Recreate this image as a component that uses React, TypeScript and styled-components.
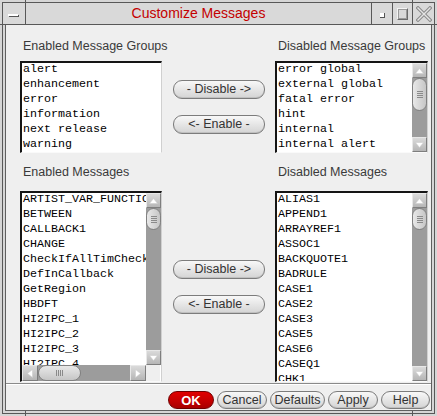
import React from 'react';
import styled, { createGlobalStyle } from 'styled-components';

const Global = createGlobalStyle`
  html, body { margin: 0; padding: 0; background: #d6d6d6; }
  #root { width: 437px; height: 416px; }
  * { box-sizing: border-box; }
`;

const Frame = styled.div`
  position: relative;
  width: 437px;
  height: 416px;
  padding: 2px;
  background: #d6d6d6;
  display: flex;
  flex-direction: column;
`;

const FrameBox = styled.div`
  flex: 1;
  border: 1px solid #585858;
  display: flex;
  flex-direction: column;
  min-height: 0;
`;

const TitleBar = styled.div`
  height: 22px;
  flex: none;
  display: flex;
  background: #d9d9d9;
  border-bottom: 1px solid #585858;
`;

const MenuButton = styled.div`
  width: 23px;
  border-right: 1px solid #585858;
  display: flex;
  align-items: center;
  justify-content: center;
  padding: 2px 2px 0 0;
`;

const MenuDash = styled.span`
  width: 10px;
  height: 2px;
  background: #fff;
  box-shadow: 1px 1px 0 #555;
`;

const Title = styled.div`
  flex: 1;
  display: flex;
  align-items: center;
  justify-content: center;
  font-family: "Liberation Sans", Arial, sans-serif;
  font-size: 14px;
  color: #c40000;
  padding-bottom: 1px;
`;

const TitleButton = styled.div<{ $w: number }>`
  width: ${p => p.$w}px;
  border-left: 1px solid #585858;
  display: flex;
  align-items: center;
  justify-content: center;
`;

const IconifyDot = styled.span`
  width: 5px;
  height: 5px;
  margin-top: 4px;
  background: #fff;
  border-right: 1px solid #555;
  border-bottom: 1px solid #555;
`;

const MaxBox = styled.span`
  width: 11px;
  height: 12px;
  border: 1px solid;
  border-color: #f4f4f4 #6a6a6a #6a6a6a #f4f4f4;
  outline: 1px solid #9a9a9a;
  outline-offset: -2px;
`;

const Tick = styled.span<{ $x?: number; $y?: number; $w: number; $h: number; $r?: number; $b?: number }>`
  position: absolute;
  ${p => (p.$x !== undefined ? `left: ${p.$x}px;` : '')}
  ${p => (p.$r !== undefined ? `right: ${p.$r}px;` : '')}
  ${p => (p.$y !== undefined ? `top: ${p.$y}px;` : '')}
  ${p => (p.$b !== undefined ? `bottom: ${p.$b}px;` : '')}
  width: ${p => p.$w}px;
  height: ${p => p.$h}px;
  background: #585858;
`;

const ClientWrap = styled.div`
  flex: 1;
  padding: 0 2px 2px 2px;
  display: flex;
  min-height: 0;
`;

const Client = styled.div`
  flex: 1;
  background: #efefef;
  border-left: 1px solid #606060;
  border-right: 1px solid #606060;
  border-bottom: 1px solid #606060;
  display: flex;
  flex-direction: column;
  font-family: "Liberation Sans", Arial, sans-serif;
`;

const MainGrid = styled.div`
  display: grid;
  grid-template-columns: 142px 1fr 153px;
  grid-template-rows: 22px 92px 38px 191px;
  padding: 14px 3px 0 14px;
`;

const Label = styled.div<{ $top?: number }>`
  font-size: 12.5px;
  line-height: 15px;
  color: #3a3a3a;
  padding-left: 3px;
  margin-top: ${p => p.$top ?? 0}px;
  white-space: nowrap;
`;

const ListBox = styled.div<{ $hscroll?: boolean }>`
  height: 100%;
  background: #fff;
  border-top: 2px solid #151515;
  border-left: 2px solid #151515;
  border-right: 1px solid #d0d0d0;
  border-bottom: 1px solid #fafafa;
  display: grid;
  grid-template-columns: 1fr 15px;
  grid-template-rows: ${p => (p.$hscroll ? '1fr 16px' : '1fr')};
  overflow: hidden;
  min-height: 0;
`;

const Items = styled.div`
  overflow: hidden;
  margin-top: -1px;
  min-width: 0;
  min-height: 0;
`;

const Item = styled.div`
  font-family: "Liberation Mono", "Courier New", monospace;
  font-size: 11.67px;
  line-height: 15px;
  height: 15px;
  color: #000;
  padding-left: 1px;
  white-space: nowrap;
  overflow: hidden;
`;

const VBar = styled.div`
  display: flex;
  flex-direction: column;
  background: #9c9c9c;
  min-height: 0;
`;

const HBar = styled.div`
  display: flex;
  background: #9c9c9c;
`;

const Arrow = styled.div<{ $h?: boolean }>`
  flex: none;
  width: ${p => (p.$h ? 16 : 15)}px;
  height: ${p => (p.$h ? 16 : 15)}px;
  background: linear-gradient(#dadada, #b6b6b6);
  border: 1px solid;
  border-color: #e8e8e8 #7e7e7e #7e7e7e #e8e8e8;
  display: flex;
  align-items: center;
  justify-content: center;
`;

const Track = styled.div<{ $h?: boolean }>`
  flex: 1;
  display: flex;
  flex-direction: ${p => (p.$h ? 'row' : 'column')};
`;

const Thumb = styled.div<{ $len: number; $h?: boolean }>`
  flex: none;
  ${p => (p.$h ? `width: ${p.$len}px; height: 16px;` : `height: ${p.$len}px; width: 15px;`)}
  border-radius: 8px;
  border: 1px solid #808080;
  background: ${p =>
    p.$h ? 'linear-gradient(#e8e8e8, #c6c6c6)' : 'linear-gradient(90deg, #e8e8e8, #c6c6c6)'};
  display: flex;
  flex-direction: ${p => (p.$h ? 'row' : 'column')};
  align-items: center;
  justify-content: center;
  gap: 1px;
`;

const Grip = styled.span<{ $h?: boolean }>`
  ${p => (p.$h ? 'width: 1px; height: 6px;' : 'width: 6px; height: 1px;')}
  background: #8a8a8a;
`;

const Corner = styled.div`
  background: #efefef;
  border-right: 1px solid #fff;
`;

const Middle = styled.div`
  display: flex;
  flex-direction: column;
  align-items: center;
  justify-content: center;
  gap: 16px;
  padding-left: 1px;
`;

const PillButton = styled.button`
  width: 92px;
  height: 19px;
  padding: 0;
  border-radius: 9px;
  border: 1px solid #7c7c7c;
  background: linear-gradient(#f8f8f8, #e2e2e2 60%, #d4d4d4);
  box-shadow: inset 0 -1px 0 #c0c0c0;
  font-family: "Liberation Sans", Arial, sans-serif;
  font-size: 12.5px;
  color: #333;
  line-height: 15px;
`;

const Separator = styled.div`
  height: 2px;
  margin-top: 1px;
  border-top: 1px solid #8a8a8a;
  border-bottom: 1px solid #fff;
`;

const ButtonBar = styled.div`
  display: flex;
  justify-content: flex-end;
  gap: 3px;
  padding: 6px 1px 0 0;
`;

const BarButton = styled.button<{ $w: number; $primary?: boolean }>`
  width: ${p => p.$w}px;
  height: 18px;
  padding: 0;
  border-radius: 9px;
  font-family: "Liberation Sans", Arial, sans-serif;
  line-height: 15px;
  white-space: nowrap;
  ${p =>
    p.$primary
      ? `
    background: linear-gradient(#e00000, #c20000 60%, #a80000);
    border: 1px solid #700000;
    color: #fff;
    font-weight: bold;
    font-size: 13px;
  `
      : `
    background: linear-gradient(#f8f8f8, #e2e2e2 60%, #d4d4d4);
    border: 1px solid #7c7c7c;
    box-shadow: inset 0 -1px 0 #c0c0c0;
    color: #333;
    font-size: 12.5px;
  `}
`;

const TriUp = () => (
  <svg width="9" height="6" viewBox="0 0 9 6">
    <polygon points="4.5,0.5 8.5,5.5 0.5,5.5" fill="#fff" stroke="#c8c8c8" strokeWidth="0.5" />
  </svg>
);
const TriDown = () => (
  <svg width="9" height="6" viewBox="0 0 9 6">
    <polygon points="0.5,0.5 8.5,0.5 4.5,5.5" fill="#fff" stroke="#c8c8c8" strokeWidth="0.5" />
  </svg>
);
const TriLeft = () => (
  <svg width="6" height="9" viewBox="0 0 6 9">
    <polygon points="0.5,4.5 5.5,0.5 5.5,8.5" fill="#fff" stroke="#c8c8c8" strokeWidth="0.5" />
  </svg>
);
const TriRight = () => (
  <svg width="6" height="9" viewBox="0 0 6 9">
    <polygon points="0.5,0.5 5.5,4.5 0.5,8.5" fill="#fff" stroke="#c8c8c8" strokeWidth="0.5" />
  </svg>
);

const CloseIcon = () => (
  <svg width="16" height="16" viewBox="0 0 16 16">
    <path d="M2 2 L14 14 M14 2 L2 14" stroke="#8a8a8a" strokeWidth="3.4" strokeLinecap="square" />
    <path d="M2 2 L14 14 M14 2 L2 14" stroke="#e4e4e4" strokeWidth="1.4" strokeLinecap="square" />
  </svg>
);

const VScroll = ({ thumb }: { thumb: number }) => (
  <VBar>
    <Arrow><TriUp /></Arrow>
    <Track>
      <Thumb $len={thumb}>
        <Grip /><Grip /><Grip /><Grip />
      </Thumb>
    </Track>
    <Arrow><TriDown /></Arrow>
  </VBar>
);

const HScroll = ({ thumb }: { thumb: number }) => (
  <HBar>
    <Arrow $h><TriLeft /></Arrow>
    <Track $h>
      <Thumb $h $len={thumb}>
        <Grip $h /><Grip $h /><Grip $h /><Grip $h />
      </Thumb>
    </Track>
    <Arrow $h><TriRight /></Arrow>
  </HBar>
);

const enabledGroups = ['alert', 'enhancement', 'error', 'information', 'next release', 'warning'];
const disabledGroups = ['error global', 'external global', 'fatal error', 'hint', 'internal', 'internal alert'];
const enabledMsgs = [
  'ARTIST_VAR_FUNCTION',
  'BETWEEN',
  'CALLBACK1',
  'CHANGE',
  'CheckIfAllTimChecks',
  'DefInCallback',
  'GetRegion',
  'HBDFT',
  'HI2IPC_1',
  'HI2IPC_2',
  'HI2IPC_3',
  'HI2IPC_4',
  'HI2IPC_5',
];
const disabledMsgs = [
  'ALIAS1',
  'APPEND1',
  'ARRAYREF1',
  'ASSOC1',
  'BACKQUOTE1',
  'BADRULE',
  'CASE1',
  'CASE2',
  'CASE3',
  'CASE5',
  'CASE6',
  'CASEQ1',
  'CHK1',
  'CHK2',
];

const ItemList = ({ items }: { items: string[] }) => (
  <Items>
    {items.map(i => (
      <Item key={i}>{i}</Item>
    ))}
  </Items>
);

export default function App() {
  return (
    <>
      <Global />
      <Frame>
        <FrameBox>
          <TitleBar>
            <MenuButton><MenuDash /></MenuButton>
            <Title>Customize Messages</Title>
            <TitleButton $w={21}><IconifyDot /></TitleButton>
            <TitleButton $w={20}><MaxBox /></TitleButton>
            <TitleButton $w={22}><CloseIcon /></TitleButton>
          </TitleBar>
          <ClientWrap>
            <Client>
              <MainGrid>
                <Label>Enabled Message Groups</Label>
                <div />
                <Label>Disabled Message Groups</Label>

                <ListBox>
                  <ItemList items={enabledGroups} />
                  <div />
                </ListBox>
                <Middle>
                  <PillButton>- Disable -&gt;</PillButton>
                  <PillButton>&lt;- Enable -</PillButton>
                </Middle>
                <ListBox>
                  <ItemList items={disabledGroups} />
                  <VScroll thumb={33} />
                </ListBox>

                <Label $top={12}>Enabled Messages</Label>
                <div />
                <Label $top={12}>Disabled Messages</Label>

                <ListBox $hscroll>
                  <ItemList items={enabledMsgs} />
                  <VScroll thumb={22} />
                  <HScroll thumb={43} />
                  <Corner />
                </ListBox>
                <Middle>
                  <PillButton>- Disable -&gt;</PillButton>
                  <PillButton>&lt;- Enable -</PillButton>
                </Middle>
                <ListBox>
                  <ItemList items={disabledMsgs} />
                  <VScroll thumb={22} />
                </ListBox>
              </MainGrid>
              <Separator />
              <ButtonBar>
                <BarButton $w={46} $primary>OK</BarButton>
                <BarButton $w={50}>Cancel</BarButton>
                <BarButton $w={55}>Defaults</BarButton>
                <BarButton $w={50}>Apply</BarButton>
                <BarButton $w={49}>Help</BarButton>
              </ButtonBar>
            </Client>
          </ClientWrap>
        </FrameBox>
        <Tick $x={25} $y={0} $w={1} $h={3} />
        <Tick $x={412} $y={0} $w={1} $h={3} />
        <Tick $x={25} $b={0} $w={1} $h={5} />
        <Tick $x={412} $b={0} $w={1} $h={5} />
        <Tick $x={0} $y={24} $w={3} $h={1} />
        <Tick $r={0} $y={24} $w={3} $h={1} />
      </Frame>
    </>
  );
}
